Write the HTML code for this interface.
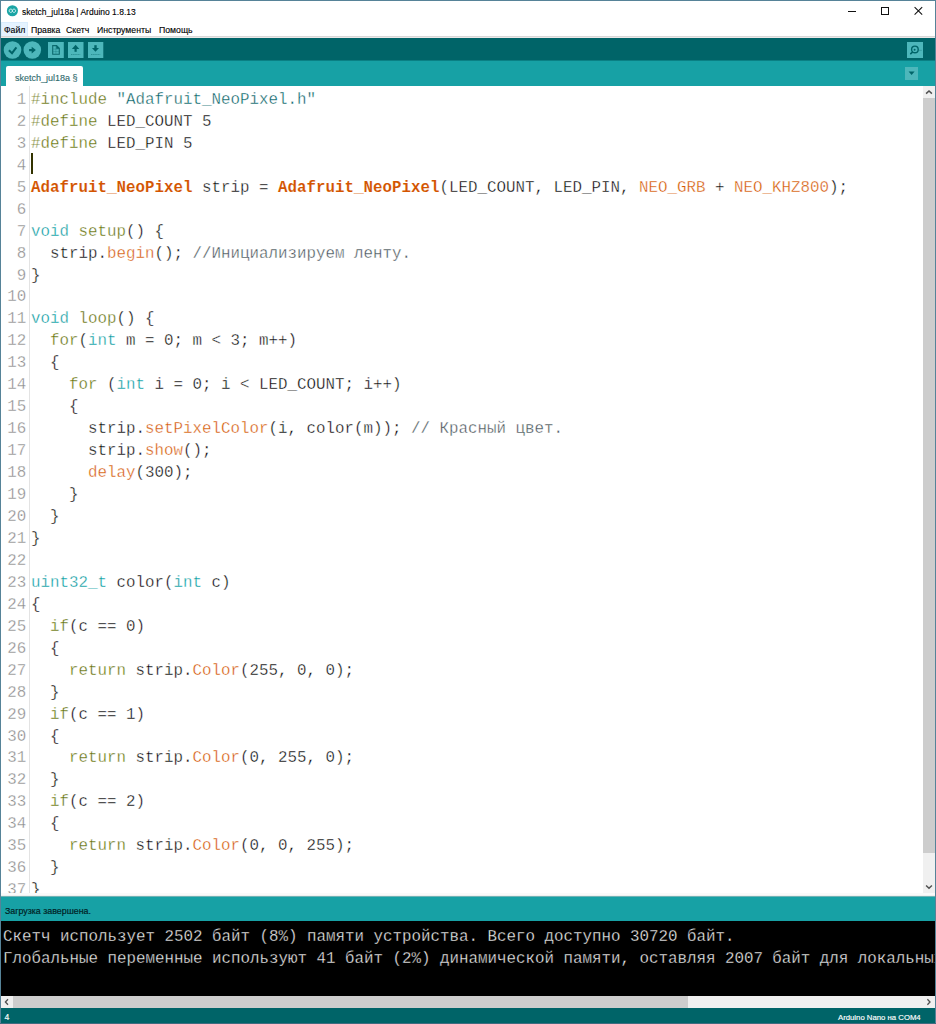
<!DOCTYPE html>
<html><head><meta charset="utf-8">
<style>
*{margin:0;padding:0;box-sizing:border-box}
html,body{width:936px;height:1024px;overflow:hidden;background:#fff}
body{position:relative;font-family:"Liberation Sans",sans-serif}
.a{position:absolute}
#bl{left:0;top:0;width:1px;height:1024px;background:#568398}
#br{left:935px;top:0;width:1px;height:1024px;background:#568398}
#bt{left:0;top:0;width:936px;height:1px;background:#568398}
#bb{left:0;top:1023px;width:936px;height:1px;background:#3e6c80}
#title{-webkit-text-stroke:0.12px #000;left:22px;top:8.3px;font-size:8.5px;line-height:1;color:#000;white-space:nowrap}
#menu{left:1px;top:22px;width:934px;height:15px;background:#fff}
#menusep{left:1px;top:36px;width:934px;height:2px;background:linear-gradient(#d8d8d8 50%,#ebe8e8 50%)}
.mi{-webkit-text-stroke:0.12px #000;position:absolute;top:25.9px;font-size:8.7px;line-height:1;color:#000;white-space:nowrap}
#mhl{left:1px;top:22px;width:27px;height:14px;background:#e5f3ff;border:1px solid #d9ecfc;border-bottom:0}
#toolbar{left:1px;top:38px;width:934px;height:23px;background:linear-gradient(#006468 22px,#0a8084 22px)}
#tabband{left:1px;top:61px;width:934px;height:25px;background:#17a1a5}
#tab{left:6px;top:66px;width:77px;height:21px;background:#fff;border-radius:2px 2px 0 0}
#tabtxt{-webkit-text-stroke:0.12px #2f6a6d;left:15px;top:73.8px;font-size:9px;line-height:1;color:#2f6a6d;white-space:nowrap}
.btn{position:absolute;background:#4db7bb}
#editor{left:1px;top:86px;width:923px;height:808px;background:#fff;overflow:hidden}
#gline{left:29px;top:86px;width:1px;height:808px;background:#e3e3e3}
#code{-webkit-text-stroke:0.35px #fff;left:31px;top:89.9px;font-family:"Liberation Mono",monospace;font-size:15.83px;line-height:21.95px;white-space:pre;color:#000}
#nums{-webkit-text-stroke:0.3px #fff;left:0px;top:89.9px;width:26.2px;text-align:right;font-family:"Liberation Mono",monospace;font-size:15.83px;line-height:21.95px;white-space:pre;color:#8b8b8b}
.k1{color:#00979c}
.k2{color:#d35400}
.k3{color:#5e6d03}
.kb{color:#d35400;font-weight:bold;-webkit-text-stroke:0.1px #fff}
.st{color:#005c5f}
.cm{color:#434f54}
#caret{left:31px;top:153px;width:2px;height:21px;background:#333300}
#vs{left:923px;top:86px;width:12px;height:807px;background:#f0f0f0}
#vthumb{left:923px;top:98px;width:12px;height:755px;background:#cdcdcd}
#edsep{left:1px;top:893px;width:934px;height:3px;background:linear-gradient(#fafafa 2px,#f0f0f0 2px)}
#status{left:1px;top:896px;width:934px;height:25px;background:linear-gradient(#6fb3b5 1px,#17a1a5 1px)}
#stattxt{-webkit-text-stroke:0.2px #002325;left:5px;top:906.6px;font-size:8.85px;line-height:1;color:#002325;white-space:nowrap}
#console{left:1px;top:921px;width:934px;height:75px;background:#000}
#contxt{-webkit-text-stroke:0.3px #000;left:3px;top:925.5px;font-family:"Liberation Mono",monospace;font-size:15.83px;line-height:22px;white-space:pre;color:#eee}
#hs{left:1px;top:996px;width:934px;height:12.5px;background:#f0f0f0}
#hthumb{left:13px;top:996px;width:675px;height:12.5px;background:#cdcdcd}
#bot{left:1px;top:1008px;width:934px;height:15px;background:#006468}
#bottxt{-webkit-text-stroke:0.15px #fff;left:838px;top:1013.8px;font-size:7.75px;line-height:1;color:#fff;white-space:nowrap}
#botnum{-webkit-text-stroke:0.15px #fff;left:4.6px;top:1012.6px;font-size:8.6px;line-height:1;color:#fff}
</style></head><body>
<div class="a" id="bt"></div>
<!-- title -->
<svg class="a" style="left:6px;top:5px" width="13" height="13" viewBox="0 0 13 13"><circle cx="6.4" cy="5.75" r="5.55" fill="#1aa5a5"/><path d="M3.2 5.75c0-2.2 3.2-2.2 3.2 0s3.2 2.2 3.2 0s-3.2-2.2-3.2 0s-3.2 2.2-3.2 0Z" fill="none" stroke="#d8f4f4" stroke-width="0.95"/></svg>
<div class="a" id="title">sketch_jul18a | Arduino 1.8.13</div>
<svg class="a" style="left:840px;top:0" width="95" height="22" viewBox="0 0 95 22">
<path d="M8 11.5H16" stroke="#111" stroke-width="1"/>
<rect x="41.5" y="7.5" width="7" height="7" fill="none" stroke="#111" stroke-width="1"/>
<path d="M74.6 7.1L82.2 14.7M82.2 7.1L74.6 14.7" stroke="#111" stroke-width="1.05"/>
</svg>
<!-- menu -->
<div class="a" id="mhl"></div>
<div class="mi" style="left:4px">Файл</div>
<div class="mi" style="left:31px">Правка</div>
<div class="mi" style="left:66px">Скетч</div>
<div class="mi" style="left:97px">Инструменты</div>
<div class="mi" style="left:159px">Помощь</div>
<div class="a" id="menusep"></div>
<!-- toolbar -->
<div class="a" id="toolbar"></div>
<svg class="a" style="left:0;top:38px" width="110" height="22" viewBox="0 38 110 22">
<circle cx="12.5" cy="50" r="8.8" fill="#4db7bb"/>
<path d="M8.9 50.3L12 53.2L16.4 47.4" fill="none" stroke="#006468" stroke-width="2"/>
<circle cx="32.3" cy="50" r="8.8" fill="#4db7bb"/>
<path d="M29.1 50.1H32.4" stroke="#006468" stroke-width="2.2"/><path d="M31.7 46.7L35.9 50.1L31.7 53.5Z" fill="#006468"/>
<rect x="48" y="42" width="15.8" height="16" fill="#4db7bb"/>
<path d="M52.7 45.6H56.6L59.3 48.3V54.2H52.7Z" fill="none" stroke="#0b6a6e" stroke-width="1.1"/><path d="M56.3 45.4L59.6 48.7H56.3Z" fill="#006468"/><path d="M53.2 49.1H58.8M53.2 51.6H58.8M55.9 46.2V53.8" fill="none" stroke="#006468" stroke-opacity="0.28" stroke-width="1"/>
<rect x="68" y="42" width="15.5" height="16" fill="#4db7bb"/>
<path d="M71.9 48.9L75.6 44.8L79.3 48.9Z" fill="#006468"/><rect x="74.5" y="48.7" width="2.2" height="3.1" fill="#006468"/>
<path d="M71.2 54.5H80.2" stroke="#006468" stroke-opacity="0.6" stroke-width="0.9" stroke-dasharray="1.2 0.9"/>
<rect x="88" y="42" width="15.3" height="16" fill="#4db7bb"/>
<rect x="94.3" y="45.2" width="2.4" height="3" fill="#006468"/><path d="M91.9 48L99 48L95.5 51.8Z" fill="#006468"/>
<path d="M91.2 54.5H100.2" stroke="#006468" stroke-opacity="0.6" stroke-width="0.9" stroke-dasharray="1.2 0.9"/>
<rect x="907" y="42" width="16" height="16" fill="#4db7bb"/>
</svg>
<svg class="a" style="left:907px;top:42px" width="16" height="16" viewBox="0 0 16 16"><rect width="16" height="16" fill="#4db7bb"/><circle cx="7.9" cy="7.45" r="3.3" fill="none" stroke="#006468" stroke-width="1.4"/><circle cx="7.6" cy="7.7" r="1" fill="#006468"/><path d="M5.5 10.2L3.8 11.7" stroke="#006468" stroke-width="1.7" stroke-linecap="round"/><path d="M11.6 8.3H14.8" stroke="#006468" stroke-opacity="0.3" stroke-width="1"/></svg>
<!-- tabs -->
<div class="a" id="tabband"></div>
<div class="a" id="tab"></div>
<div class="a" id="tabtxt">sketch_jul18a §</div>
<div class="a" style="left:905px;top:67px;width:13px;height:13px;background:#4db7bb"></div>
<svg class="a" style="left:905px;top:67px" width="13" height="13" viewBox="0 0 13 13"><path d="M3.6 4.6H9.6L6.6 8Z" fill="#006468"/></svg>
<!-- editor -->
<div class="a" id="editor"></div>
<div class="a" id="gline"></div>
<div class="a" id="nums">1
2
3
4
5
6
7
8
9
10
11
12
13
14
15
16
17
18
19
20
21
22
23
24
25
26
27
28
29
30
31
32
33
34
35
36
37</div>
<div class="a" id="code"><span class="k3">#include</span> <span class="st">"Adafruit_NeoPixel.h"</span>
<span class="k3">#define</span> LED_COUNT 5
<span class="k3">#define</span> LED_PIN 5

<span class="kb">Adafruit_NeoPixel</span> strip = <span class="kb">Adafruit_NeoPixel</span>(LED_COUNT, LED_PIN, <span class="k2">NEO_GRB</span> + <span class="k2">NEO_KHZ800</span>);

<span class="k1">void</span> <span class="k3">setup</span>() {
  strip.<span class="k2">begin</span>(); <span class="cm">//Инициализируем ленту.</span>
}

<span class="k1">void</span> <span class="k3">loop</span>() {
  <span class="k3">for</span>(<span class="k1">int</span> m = 0; m &lt; 3; m++)
  {
    <span class="k3">for</span> (<span class="k1">int</span> i = 0; i &lt; LED_COUNT; i++)
    {
      strip.<span class="k2">setPixelColor</span>(i, color(m)); <span class="cm">// Красный цвет.</span>
      strip.<span class="k2">show</span>();
      <span class="k2">delay</span>(300);
    }
  }
}

<span class="k1">uint32_t</span> color(<span class="k1">int</span> c)
{
  <span class="k3">if</span>(c == 0)
  {
    <span class="k3">return</span> strip.<span class="k2">Color</span>(255, 0, 0);
  }
  <span class="k3">if</span>(c == 1)
  {
    <span class="k3">return</span> strip.<span class="k2">Color</span>(0, 255, 0);
  }
  <span class="k3">if</span>(c == 2)
  {
    <span class="k3">return</span> strip.<span class="k2">Color</span>(0, 0, 255);
  }
}</div>
<div class="a" id="caret"></div>
<div class="a" id="vs"></div>
<div class="a" id="vthumb"></div>
<svg class="a" style="left:923px;top:86px" width="12" height="12" viewBox="0 0 12 12"><path d="M3.1 7.6L6 4.9L8.9 7.6" fill="none" stroke="#505050" stroke-width="1.5"/></svg>
<svg class="a" style="left:923px;top:881px" width="12" height="12" viewBox="0 0 12 12"><path d="M3.1 4.5L6 7.3L8.9 4.5" fill="none" stroke="#505050" stroke-width="1.5"/></svg>
<div class="a" id="edsep"></div>
<!-- status -->
<div class="a" id="status"></div>
<div class="a" id="stattxt">Загрузка завершена.</div>
<div class="a" id="console"></div>
<div class="a" id="contxt">Скетч использует 2502 байт (8%) памяти устройства. Всего доступно 30720 байт.
Глобальные переменные используют 41 байт (2%) динамической памяти, оставляя 2007 байт для локальных переменных. Максимум: 2048 байт.</div>
<div class="a" id="hs"></div>
<div class="a" id="hthumb"></div>
<svg class="a" style="left:1px;top:996px" width="12" height="12" viewBox="0 0 12 12"><path d="M7 3.3L4.4 6L7 8.7" fill="none" stroke="#505050" stroke-width="1.3"/></svg>
<svg class="a" style="left:923px;top:996px" width="12" height="12" viewBox="0 0 12 12"><path d="M4.4 3.3L7 6L4.4 8.7" fill="none" stroke="#505050" stroke-width="1.3"/></svg>
<div class="a" id="bot"></div>
<div class="a" id="botnum">4</div>
<div class="a" id="bottxt">Arduino Nano на COM4</div>
<div class="a" id="bl"></div>
<div class="a" id="br"></div>
<div class="a" id="bb"></div>
</body></html>
